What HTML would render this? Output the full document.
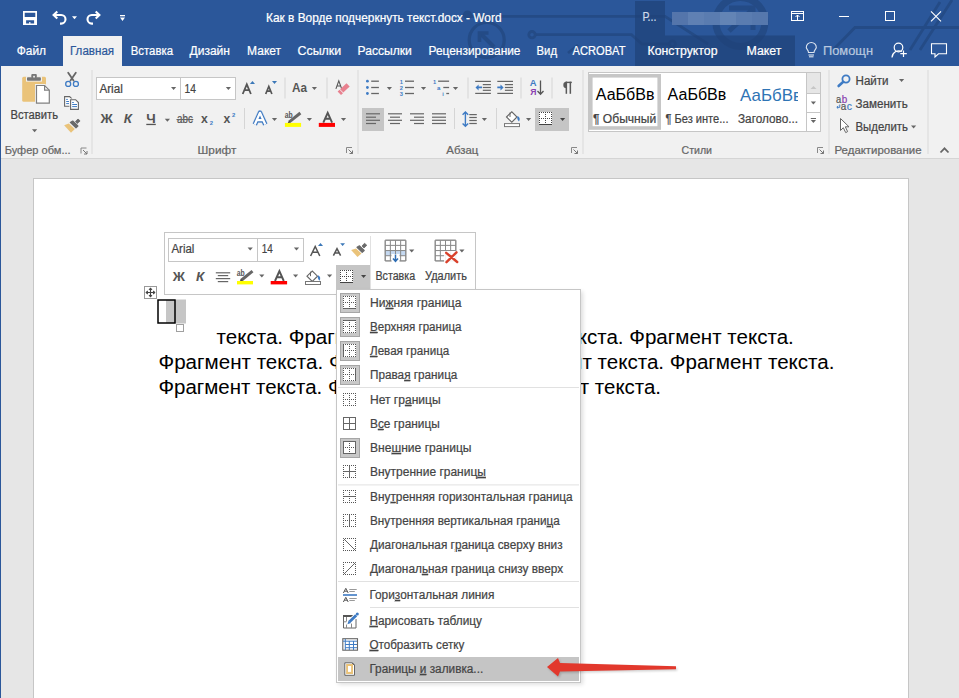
<!DOCTYPE html>
<html><head><meta charset="utf-8"><title>Word</title>
<style>
html,body{margin:0;padding:0;width:959px;height:698px;overflow:hidden;background:#E6E6E6}
svg{display:block}
text{font-family:"Liberation Sans", sans-serif;}
text.w{stroke-width:0.22px}
</style></head><body>
<svg width="959" height="698" viewBox="0 0 959 698">
<rect x="0" y="0" width="959" height="66" fill="#2B579A" />
<rect x="0" y="66" width="959" height="92" fill="#F1F1F1" />
<rect x="0" y="158" width="959" height="1" fill="#D5D5D5" />
<rect x="0" y="159" width="959" height="539" fill="#E6E6E6" />
<rect x="0" y="66" width="1" height="632" fill="#2B579A" />
<rect x="33.5" y="178.5" width="875" height="530" fill="#FFFFFF" stroke="#C6C6C6" stroke-width="1"/>
<g fill="none" stroke="#244B86" stroke-width="2.8" opacity="1">
<path d="M467.5 16.3 H665 L708 44"/>
<circle cx="467.5" cy="15" r="3.2" fill="#244B86"/>
<circle cx="486.7" cy="40" r="17.5" stroke-width="3.2"/>
<path d="M481 34 L494 47" stroke-width="4"/>
<path d="M479.5 42 V33 H488.5" stroke-width="3.6"/>
<path d="M535.5 34.7 H631.5 L642 44 H669"/>
<circle cx="532" cy="34.7" r="3.2"/>
<circle cx="672.4" cy="43.8" r="3"/>
<path d="M568 53 L578 45"/>
<circle cx="740.4" cy="21.9" r="24.5" stroke-width="7"/>
<path d="M729 8 H753 V30" stroke-width="5"/>
<path d="M752 10 L729 31" stroke-width="5"/>
<path d="M834 49 L855 27.5 H959"/>
<path d="M910 50 L940 2 M920 50 L952 0"/>
</g>
<path d="M635 1 H665 V35.5 H795 V66 H635 Z" fill="#1F4177" opacity="0.7"/>
<text x="266.00" y="21.70" font-size="13" fill="#FFFFFF" class="w" stroke="#FFFFFF" textLength="235.50" lengthAdjust="spacingAndGlyphs">Как в Ворде подчеркнуть текст.docx - Word</text>
<text x="642.60" y="20.80" font-size="12" fill="#D0DAEA" class="w" stroke="#D0DAEA" textLength="13.70" lengthAdjust="spacingAndGlyphs">Р...</text>
<g>
<rect x="672" y="12" width="96" height="13" fill="#5A7CB0"/>
<rect x="672" y="12" width="16" height="13" fill="#5475AB"/>
<rect x="688" y="12" width="16" height="13" fill="#5F80B3"/>
<rect x="720" y="12" width="16" height="13" fill="#6384B5"/>
<rect x="752" y="12" width="16" height="13" fill="#5678AD"/>
</g>
<rect x="63" y="36" width="59" height="30" fill="#F1F1F1" />
<text x="16.70" y="55.20" font-size="12.5" fill="#FFFFFF" class="w" stroke="#FFFFFF" textLength="29.30" lengthAdjust="spacingAndGlyphs">Файл</text>
<text x="70.00" y="55.20" font-size="12.5" fill="#2B579A" class="w" stroke="#2B579A" textLength="44.10" lengthAdjust="spacingAndGlyphs">Главная</text>
<text x="130.80" y="55.20" font-size="12.5" fill="#FFFFFF" class="w" stroke="#FFFFFF" textLength="42.20" lengthAdjust="spacingAndGlyphs">Вставка</text>
<text x="189.50" y="55.20" font-size="12.5" fill="#FFFFFF" class="w" stroke="#FFFFFF" textLength="40.50" lengthAdjust="spacingAndGlyphs">Дизайн</text>
<text x="247.10" y="55.20" font-size="12.5" fill="#FFFFFF" class="w" stroke="#FFFFFF" textLength="34.00" lengthAdjust="spacingAndGlyphs">Макет</text>
<text x="297.50" y="55.20" font-size="12.5" fill="#FFFFFF" class="w" stroke="#FFFFFF" textLength="43.70" lengthAdjust="spacingAndGlyphs">Ссылки</text>
<text x="357.50" y="55.20" font-size="12.5" fill="#FFFFFF" class="w" stroke="#FFFFFF" textLength="54.30" lengthAdjust="spacingAndGlyphs">Рассылки</text>
<text x="428.50" y="55.20" font-size="12.5" fill="#FFFFFF" class="w" stroke="#FFFFFF" textLength="92.00" lengthAdjust="spacingAndGlyphs">Рецензирование</text>
<text x="536.50" y="55.20" font-size="12.5" fill="#FFFFFF" class="w" stroke="#FFFFFF" textLength="20.50" lengthAdjust="spacingAndGlyphs">Вид</text>
<text x="572.50" y="55.20" font-size="12.5" fill="#FFFFFF" class="w" stroke="#FFFFFF" textLength="53.00" lengthAdjust="spacingAndGlyphs">ACROBAT</text>
<text x="647.50" y="55.20" font-size="12.5" fill="#FFFFFF" class="w" stroke="#FFFFFF" textLength="70.00" lengthAdjust="spacingAndGlyphs">Конструктор</text>
<text x="746.50" y="55.20" font-size="12.5" fill="#FFFFFF" class="w" stroke="#FFFFFF" textLength="35.00" lengthAdjust="spacingAndGlyphs">Макет</text>
<text x="823.00" y="55.20" font-size="12.5" fill="#B9C8DF" class="w" stroke="#B9C8DF" textLength="50.00" lengthAdjust="spacingAndGlyphs">Помощн</text>
<g fill="#FFFFFF">
<path d="M23 11 H37 V25 H23 Z M24.7 12.7 V16.9 H35.3 V12.7 Z M26.1 20.3 V23.4 H29.2 V22.1 H30.4 V23.4 H34.1 V20.3 Z" fill-rule="evenodd"/>
</g>
<g fill="none" stroke="#FFFFFF" stroke-width="2.1">
<path d="M53.5 15 H61.2 A4.3 4.3 0 0 1 61.2 23.6 H60"/>
<path d="M57.3 11.5 L53.6 15 L57.3 18.5"/>
</g>
<path d="M72 16.3 H77 L74.5 19.3 Z" fill="#FFFFFF"/>
<g fill="none" stroke="#FFFFFF" stroke-width="2.1">
<path d="M99.5 15 H91.8 A4.3 4.3 0 0 0 91.8 23.6 H93"/>
<path d="M95.7 11.5 L99.4 15 L95.7 18.5"/>
</g>
<rect x="120" y="15" width="5" height="1.3" fill="#FFFFFF"/><path d="M120 17.5 H125 L122.5 21 Z" fill="#FFFFFF"/>
<g fill="none" stroke="#FFFFFF" stroke-width="1" shape-rendering="crispEdges">
<rect x="791.5" y="11.5" width="12" height="9"/>
<line x1="791.5" y1="13.5" x2="803.5" y2="13.5"/>
<line x1="797.5" y1="15" x2="797.5" y2="20.5"/>
<line x1="839" y1="16.5" x2="849" y2="16.5"/>
<rect x="885.5" y="11.5" width="9" height="9"/>
</g>
<path d="M795.5 17 L797.5 15 L799.5 17" fill="none" stroke="#FFFFFF" stroke-width="1"/>
<path d="M931 11.3 L941 21.3 M941 11.3 L931 21.3" stroke="#FFFFFF" stroke-width="1.1"/>
<g fill="none" stroke="#DDE5F0" stroke-width="1.1">
<path d="M808.5 52.5 C808.5 50 806.3 49 806.3 47.5 A5 5 0 0 1 816.3 47.5 C816.3 49 814 50 814 52.5 Z"/>
<line x1="808.5" y1="55" x2="814" y2="55"/>
<line x1="809" y1="56.8" x2="813.5" y2="56.8"/>
</g>
<g fill="none" stroke="#FFFFFF" stroke-width="1.2">
<circle cx="898.5" cy="47.5" r="4.3"/>
<path d="M892 57.5 A7 7 0 0 1 902 51.5"/>
<path d="M903.5 50.5 V57 M900.3 53.7 H906.8"/>
</g>
<path d="M931.5 43.8 H946.5 V53.8 H938.5 L935 57 V53.8 H931.5 Z" fill="none" stroke="#FFFFFF" stroke-width="1.1"/>
<text x="10.50" y="118.50" font-size="12" fill="#444444" class="w" stroke="#444444" textLength="47.50" lengthAdjust="spacingAndGlyphs">Вставить</text>
<text x="4.70" y="153.60" font-size="11" fill="#666666" class="w" stroke="#666666" textLength="66.00" lengthAdjust="spacingAndGlyphs">Буфер обм...</text>
<text x="197.60" y="153.60" font-size="11" fill="#666666" class="w" stroke="#666666" textLength="38.70" lengthAdjust="spacingAndGlyphs">Шрифт</text>
<text x="446.30" y="153.60" font-size="11" fill="#666666" class="w" stroke="#666666" textLength="32.00" lengthAdjust="spacingAndGlyphs">Абзац</text>
<text x="681.50" y="153.60" font-size="11" fill="#666666" class="w" stroke="#666666" textLength="30.50" lengthAdjust="spacingAndGlyphs">Стили</text>
<text x="834.50" y="153.60" font-size="11" fill="#666666" class="w" stroke="#666666" textLength="87.00" lengthAdjust="spacingAndGlyphs">Редактирование</text>
<rect x="91.5" y="70" width="1" height="84" fill="#DADADA" />
<rect x="357.5" y="70" width="1" height="84" fill="#DADADA" />
<rect x="582.5" y="70" width="1" height="84" fill="#DADADA" />
<rect x="828.5" y="70" width="1" height="84" fill="#DADADA" />
<rect x="927.5" y="70" width="1" height="84" fill="#DADADA" />
<rect x="96.5" y="77.5" width="84" height="22" fill="#FFFFFF" stroke="#C6C6C6"/>
<rect x="180.5" y="77.5" width="55" height="22" fill="#FFFFFF" stroke="#C6C6C6"/>
<text x="99.40" y="92.90" font-size="12" fill="#444444" class="w" stroke="#444444" textLength="23.40" lengthAdjust="spacingAndGlyphs">Arial</text>
<text x="184.60" y="92.90" font-size="12" fill="#444444" class="w" stroke="#444444" textLength="11.40" lengthAdjust="spacingAndGlyphs">14</text>
<rect x="588.5" y="72.5" width="232" height="59" fill="#FFFFFF" stroke="#C6C6C6"/>
<rect x="590.8" y="75.8" width="68.4" height="52.2" fill="none" stroke="#C6C6C6" stroke-width="3.6"/>
<text x="595.80" y="99.90" font-size="16" fill="#000000" textLength="58.70" lengthAdjust="spacingAndGlyphs">АаБбВв</text>
<text x="593.00" y="122.60" font-size="12" fill="#444444" class="w" stroke="#444444" textLength="63.20" lengthAdjust="spacingAndGlyphs">¶ Обычный</text>
<text x="667.60" y="99.90" font-size="16" fill="#000000" textLength="58.70" lengthAdjust="spacingAndGlyphs">АаБбВв</text>
<text x="665.40" y="122.60" font-size="12" fill="#444444" class="w" stroke="#444444" textLength="63.10" lengthAdjust="spacingAndGlyphs">¶ Без инте...</text>
<clipPath id="cl1"><rect x="730" y="80" width="68" height="30"/></clipPath>
<text x="740.00" y="100.70" font-size="17" fill="#2E74B5" textLength="62.00" lengthAdjust="spacingAndGlyphs" clip-path="url(#cl1)">АаБбВв</text>
<text x="738.00" y="122.60" font-size="12" fill="#444444" class="w" stroke="#444444" textLength="60.00" lengthAdjust="spacingAndGlyphs">Заголово...</text>
<rect x="806.5" y="72.5" width="14" height="59" fill="#FFFFFF" stroke="#C6C6C6"/>
<rect x="807" y="73" width="13" height="20" fill="#E6E6E6" />
<line x1="806.5" y1="93.5" x2="820.5" y2="93.5" stroke="#C6C6C6" stroke-width="1" />
<line x1="806.5" y1="112.5" x2="820.5" y2="112.5" stroke="#C6C6C6" stroke-width="1" />
<text x="855.50" y="84.90" font-size="12" fill="#444444" class="w" stroke="#444444" textLength="33.10" lengthAdjust="spacingAndGlyphs">Найти</text>
<text x="855.50" y="107.90" font-size="12" fill="#444444" class="w" stroke="#444444" textLength="52.20" lengthAdjust="spacingAndGlyphs">Заменить</text>
<text x="855.50" y="131.00" font-size="12" fill="#444444" class="w" stroke="#444444" textLength="52.50" lengthAdjust="spacingAndGlyphs">Выделить</text>
<rect x="362" y="108" width="22" height="23" fill="#C5C5C5" />
<rect x="535" y="108" width="34" height="23" fill="#C5C5C5" />
<g>
<rect x="22.2" y="76.8" width="23.8" height="25" rx="1.5" fill="#EAC37A"/>
<rect x="26" y="76.3" width="16" height="5.3" fill="#F1F1F1"/>
<rect x="27" y="77.3" width="13.9" height="3.4" rx="0.8" fill="#777"/>
<rect x="31.3" y="74" width="5.5" height="4" rx="1" fill="#777"/>
<rect x="33.2" y="75.8" width="1.7" height="1.7" fill="#F1F1F1"/>
<path d="M35 84 H45.2 L50.8 89.6 V104.7 H35 Z" fill="#F1F1F1"/>
<path d="M36.5 85.5 H44.6 L49.3 90.2 V103.2 H36.5 Z" fill="#FFF" stroke="#808080" stroke-width="1.2"/>
<path d="M44.6 85.5 V90.2 H49.3" fill="none" stroke="#808080" stroke-width="1.2"/>
</g>
<path d="M32 129.2 H37.2 L34.6 132.2 Z" fill="#666"/>
<g>
<path d="M68.2 72.8 L73.5 80.5 M75.8 72.8 L70.5 80.5" stroke="#666" stroke-width="1.8" stroke-linecap="round"/>
<circle cx="68.2" cy="83.9" r="2.5" fill="none" stroke="#3E7BC4" stroke-width="1.3"/>
<circle cx="75.9" cy="83.9" r="2.5" fill="none" stroke="#3E7BC4" stroke-width="1.3"/>
</g>
<g stroke="#666" stroke-width="1.1" fill="#FFF">
<path d="M64.6 96.6 H69.6 L71.6 98.6 V106.3 H64.6 Z"/>
<path d="M70.6 99.7 H75.6 L78.4 102.5 V109.4 H70.6 Z" stroke="#F1F1F1" stroke-width="2.4"/>
<path d="M70.6 99.7 H75.6 L78.4 102.5 V109.4 H70.6 Z"/>
</g>
<g stroke="#3E7BC4" stroke-width="1">
<path d="M66.2 99.4 H67.8 M66.2 101.5 H69 M66.2 103.6 H69"/>
<path d="M72.2 102.5 H73.8 M72.2 104.5 H77 M72.2 106.6 H77"/>
</g>
<path d="M64.1 125.3 L68.8 123.6 L74.8 129 L71 132.7 Z" fill="#EAC37A"/>
<path d="M70.3 122.4 L72.7 121 L77.9 126 L76 127.8 Z" fill="#6A6A6A" stroke="#6A6A6A" stroke-width="1.2" stroke-linejoin="round"/>
<path d="M75.5 121.4 L78 119 L80.1 120.9 L77.2 123.5 Z" fill="#6A6A6A" stroke="#6A6A6A" stroke-width="0.8" stroke-linejoin="round"/>
<path d="M81.0 153.5 V148.0 H86.5" fill="none" stroke="#888" stroke-width="1"/><path d="M83.0 150.0 L87.0 154.0 M87.0 151.0 V154.0 H84.0" fill="none" stroke="#777" stroke-width="1"/>
<path d="M346.5 153 V147.5 H352" fill="none" stroke="#888" stroke-width="1"/><path d="M348.5 149.5 L352.5 153.5 M352.5 150.5 V153.5 H349.5" fill="none" stroke="#777" stroke-width="1"/>
<path d="M571.5 153 V147.5 H577" fill="none" stroke="#888" stroke-width="1"/><path d="M573.5 149.5 L577.5 153.5 M577.5 150.5 V153.5 H574.5" fill="none" stroke="#777" stroke-width="1"/>
<path d="M817.5 153 V147.5 H823" fill="none" stroke="#888" stroke-width="1"/><path d="M819.5 149.5 L823.5 153.5 M823.5 150.5 V153.5 H820.5" fill="none" stroke="#777" stroke-width="1"/>
<path d="M171 87 H176.2 L173.6 90 Z" fill="#666"/>
<path d="M225.8 87 H231.0 L228.4 90 Z" fill="#666"/>
<text x="100.50" y="122.80" font-size="12.5" fill="#555" font-weight="bold" textLength="12.30" lengthAdjust="spacingAndGlyphs">Ж</text>
<text x="123.80" y="122.80" font-size="12.5" fill="#555" font-weight="bold" textLength="8.20" lengthAdjust="spacingAndGlyphs" font-style="italic">К</text>
<text x="146.30" y="122.80" font-size="12.5" fill="#555" font-weight="bold" textLength="9.50" lengthAdjust="spacingAndGlyphs">Ч</text>
<rect x="146.3" y="123.8" width="9.5" height="1.3" fill="#555" />
<path d="M164.8 118.8 H170.0 L167.4 121.8 Z" fill="#666"/>
<text x="177.10" y="122.80" font-size="12.5" fill="#555" class="w" stroke="#555" textLength="15.70" lengthAdjust="spacingAndGlyphs">abc</text>
<rect x="176.5" y="119" width="16.8" height="1.1" fill="#666" />
<text x="201.10" y="122.80" font-size="12.5" fill="#555" font-weight="bold" textLength="6.80" lengthAdjust="spacingAndGlyphs">x</text>
<text x="209.80" y="124.80" font-size="6" fill="#3E7BC4" font-weight="bold" textLength="3.30" lengthAdjust="spacingAndGlyphs">2</text>
<text x="223.60" y="122.80" font-size="12.5" fill="#555" font-weight="bold" textLength="6.80" lengthAdjust="spacingAndGlyphs">x</text>
<text x="231.90" y="117.30" font-size="6" fill="#3E7BC4" font-weight="bold" textLength="3.30" lengthAdjust="spacingAndGlyphs">2</text>
<g fill="none" stroke="#555" stroke-width="1.5">
<path d="M242.7 94 L246.8 84.4 L250.9 94 M244.3 90.2 H249.3" stroke-width="1.8"/>
<path d="M265.7 94 L268.8 86.5 L271.9 94 M266.8 91.2 H270.8" stroke-width="1.7"/>
</g>
<path d="M249.9 83.9 L252.45 80.9 L255 83.9 Z" fill="#3C78B8"/>
<path d="M272 80.9 H277 L274.5 83.9 Z" fill="#3C78B8"/>
<rect x="284.5" y="77.5" width="1" height="21" fill="#D5D5D5" />
<rect x="326.5" y="77.5" width="1" height="21" fill="#D5D5D5" />
<text x="292.10" y="91.70" font-size="12.5" fill="#555" font-weight="bold" textLength="15.00" lengthAdjust="spacingAndGlyphs">Aa</text>
<path d="M311.8 87.1 H317.0 L314.40000000000003 90.1 Z" fill="#666"/>
<path d="M335.9 88.9 L338.8 80.9 L341.7 88.9 M337 86 H340.6" fill="none" stroke="#555" stroke-width="1.1"/>
<path d="M340.1 89.2 L346.5 83.2 L349.7 86.6 L343.3 92.6 Z" fill="#E8818F"/>
<path d="M337.6 91.5 L339.6 89.7 L343 93.3 L341 95.1 Z" fill="#E8818F"/>
<rect x="244" y="108" width="1" height="21" fill="#D5D5D5" />
<path d="M254.8 124.5 L260 112.8 L265.3 124.5 M256.9 120.2 H263.1" fill="none" stroke="#8DB3E2" stroke-width="5.4" stroke-linejoin="round" opacity="0.5"/>
<path d="M254.8 124.5 L260 112.8 L265.3 124.5 M256.9 120.2 H263.1" fill="none" stroke="#3D78C0" stroke-width="4.4" stroke-linejoin="round"/>
<path d="M254.8 124.5 L260 112.8 L265.3 124.5 M256.9 120.2 H263.1" fill="none" stroke="#FFF" stroke-width="2.2" stroke-linejoin="round"/>
<path d="M271.9 118 H277.09999999999997 L274.5 121 Z" fill="#666"/>
<text x="284.70" y="117.80" font-size="9.5" fill="#555" font-weight="bold" textLength="8.00" lengthAdjust="spacingAndGlyphs">ab</text>
<path d="M289 122.2 L300.4 113" stroke="#666" stroke-width="3"/><path d="M288.2 123 L290 121.5" stroke="#444" stroke-width="1.2"/>
<rect x="284.9" y="122.9" width="16.2" height="4" fill="#FFFF00" />
<path d="M306.8 118 H312.0 L309.40000000000003 121 Z" fill="#666"/>
<path d="M323.3 122.7 L327.7 112.8 L332.1 122.7 M325 118.8 H330.4" fill="none" stroke="#555" stroke-width="1.9"/>
<rect x="318.8" y="122.9" width="16.2" height="4" fill="#FF0000" />
<path d="M340.9 118 H346.09999999999997 L343.5 121 Z" fill="#666"/>
<circle cx="367.4" cy="81.2" r="1.4" fill="#3E7BC4"/>
<rect x="371.2" y="80.55" width="7.7" height="1.3" fill="#666666" />
<rect x="405" y="80.55" width="9" height="1.3" fill="#666666" />
<circle cx="367.4" cy="87.5" r="1.4" fill="#3E7BC4"/>
<rect x="371.2" y="86.85" width="7.7" height="1.3" fill="#666666" />
<rect x="405" y="86.85" width="9" height="1.3" fill="#666666" />
<circle cx="367.4" cy="93.5" r="1.4" fill="#3E7BC4"/>
<rect x="371.2" y="92.85" width="7.7" height="1.3" fill="#666666" />
<rect x="405" y="92.85" width="9" height="1.3" fill="#666666" />
<path d="M386.8 87 H392.0 L389.40000000000003 90 Z" fill="#666"/>
<path d="M420.9 87 H426.09999999999997 L423.5 90 Z" fill="#666"/>
<path d="M452.9 87 H458.09999999999997 L455.5 90 Z" fill="#666"/>
<text x="399.80" y="84.00" font-size="5.5" fill="#3E7BC4" font-weight="bold" textLength="3.20" lengthAdjust="spacingAndGlyphs">1</text>
<text x="399.80" y="90.20" font-size="5.5" fill="#3E7BC4" font-weight="bold" textLength="3.20" lengthAdjust="spacingAndGlyphs">2</text>
<text x="399.80" y="96.20" font-size="5.5" fill="#3E7BC4" font-weight="bold" textLength="3.20" lengthAdjust="spacingAndGlyphs">3</text>
<text x="432.90" y="84.00" font-size="5.5" fill="#3E7BC4" font-weight="bold" textLength="3.20" lengthAdjust="spacingAndGlyphs">1</text>
<text x="437.00" y="90.20" font-size="5.5" fill="#3E7BC4" font-weight="bold" textLength="3.40" lengthAdjust="spacingAndGlyphs">a</text>
<text x="442.20" y="96.20" font-size="5.5" fill="#3E7BC4" font-weight="bold" textLength="1.50" lengthAdjust="spacingAndGlyphs">i</text>
<rect x="438.1" y="80.55" width="11" height="1.3" fill="#666666" />
<rect x="443.3" y="86.85" width="5.8" height="1.3" fill="#666666" />
<rect x="446.3" y="92.85" width="2.8" height="1.3" fill="#666666" />
<rect x="467.5" y="77.5" width="1" height="21" fill="#D5D5D5" />
<rect x="520.5" y="77.5" width="1" height="21" fill="#D5D5D5" />
<rect x="551.5" y="77.5" width="1" height="21" fill="#D5D5D5" />
<rect x="475.2" y="80.8" width="15.7" height="1.2" fill="#666666" />
<rect x="475.2" y="92.8" width="15.7" height="1.2" fill="#666666" />
<rect x="482.8" y="84" width="8.1" height="1.2" fill="#666666" />
<rect x="482.8" y="86.9" width="8.1" height="1.2" fill="#666666" />
<rect x="482.8" y="89.7" width="8.1" height="1.2" fill="#666666" />
<rect x="497.3" y="80.8" width="15.7" height="1.2" fill="#666666" />
<rect x="497.3" y="92.8" width="15.7" height="1.2" fill="#666666" />
<rect x="504.90000000000003" y="84" width="8.1" height="1.2" fill="#666666" />
<rect x="504.90000000000003" y="86.9" width="8.1" height="1.2" fill="#666666" />
<rect x="504.90000000000003" y="89.7" width="8.1" height="1.2" fill="#666666" />
<path d="M475.5 87.4 L478.6 84.4 V86.5 H482 V88.3 H478.6 V90.4 Z" fill="#3E7BC4"/>
<path d="M503.6 87.4 L500.5 84.4 V86.5 H497.3 V88.3 H500.5 V90.4 Z" fill="#3E7BC4"/>
<text x="529.70" y="86.40" font-size="9" fill="#3E7BC4" font-weight="bold" textLength="6.80" lengthAdjust="spacingAndGlyphs">A</text>
<text x="530.20" y="94.70" font-size="9" fill="#8A3FB0" font-weight="bold" textLength="6.20" lengthAdjust="spacingAndGlyphs">Я</text>
<path d="M540.5 80.4 V94 M537.5 91 L540.5 94.3 L543.5 91" fill="none" stroke="#555" stroke-width="1.3"/>
<g fill="#5A5A5A"><path d="M566.6 81.8 H561.9 A0.1 0.1 0 0 0 561.9 81.8 Z"/><path d="M566.6 81.7 A3.3 3.3 0 0 0 566.6 88.3 Z"/><rect x="565.6" y="81.7" width="6.2" height="1.4"/><rect x="565.6" y="81.7" width="1.5" height="12.1"/><rect x="569.6" y="81.7" width="1.5" height="12.1"/></g>
<rect x="366" y="113.2" width="14" height="1.2" fill="#666666" />
<rect x="366" y="116.60000000000001" width="10" height="1.2" fill="#666666" />
<rect x="366" y="119.7" width="14" height="1.2" fill="#666666" />
<rect x="366" y="122.9" width="10" height="1.2" fill="#666666" />
<rect x="388" y="113.2" width="14" height="1.2" fill="#666666" />
<rect x="390" y="116.60000000000001" width="10" height="1.2" fill="#666666" />
<rect x="388" y="119.7" width="14" height="1.2" fill="#666666" />
<rect x="390" y="122.9" width="10" height="1.2" fill="#666666" />
<rect x="410" y="113.2" width="14" height="1.2" fill="#666666" />
<rect x="414" y="116.60000000000001" width="10" height="1.2" fill="#666666" />
<rect x="410" y="119.7" width="14" height="1.2" fill="#666666" />
<rect x="414" y="122.9" width="10" height="1.2" fill="#666666" />
<rect x="432" y="113.2" width="14" height="1.2" fill="#666666" />
<rect x="432" y="116.60000000000001" width="14" height="1.2" fill="#666666" />
<rect x="432" y="119.7" width="14" height="1.2" fill="#666666" />
<rect x="432" y="122.9" width="14" height="1.2" fill="#666666" />
<rect x="454" y="108" width="1" height="21" fill="#D5D5D5" />
<rect x="496" y="108" width="1" height="21" fill="#D5D5D5" />
<path d="M465.4 112 V126.2 M462.6 114.8 L465.4 112 L468.2 114.8 M462.6 123.4 L465.4 126.2 L468.2 123.4" fill="none" stroke="#3E7BC4" stroke-width="1.4"/>
<rect x="469.3" y="114.0" width="7.5" height="1.2" fill="#666666" />
<rect x="469.3" y="116.9" width="7.5" height="1.2" fill="#666666" />
<rect x="469.3" y="119.9" width="7.5" height="1.2" fill="#666666" />
<rect x="469.3" y="122.9" width="7.5" height="1.2" fill="#666666" />
<path d="M481.8 118 H487.0 L484.40000000000003 121 Z" fill="#666"/>
<path d="M506.5 117 L511.8 111.8 L517 117 L511.8 122.2 Z" fill="#FFF" stroke="#666" stroke-width="1.1"/>
<path d="M510 112.5 V117" stroke="#666" stroke-width="1"/>
<path d="M517.5 116 Q521 117.5 519 121.5 Q516.5 119 517.5 116 Z" fill="#3E7BC4"/>
<rect x="504.5" y="123.6" width="15" height="3" fill="#FFF" stroke="#777" stroke-width="1"/>
<path d="M526 118 H531.2 L528.6 121 Z" fill="#666"/>
<rect x="539" y="112" width="13" height="13" fill="#FFFFFF" />
<g shape-rendering="crispEdges"><rect x="539" y="124" width="13" height="1" fill="#444"/><rect x="539" y="112" width="1" height="1" fill="#444"/><rect x="539" y="114" width="1" height="1" fill="#444"/><rect x="539" y="116" width="1" height="1" fill="#444"/><rect x="539" y="118" width="1" height="1" fill="#444"/><rect x="539" y="120" width="1" height="1" fill="#444"/><rect x="539" y="122" width="1" height="1" fill="#444"/><rect x="539" y="124" width="1" height="1" fill="#444"/><rect x="541" y="112" width="1" height="1" fill="#444"/><rect x="541" y="118" width="1" height="1" fill="#444"/><rect x="543" y="112" width="1" height="1" fill="#444"/><rect x="543" y="118" width="1" height="1" fill="#444"/><rect x="545" y="112" width="1" height="1" fill="#444"/><rect x="545" y="114" width="1" height="1" fill="#444"/><rect x="545" y="116" width="1" height="1" fill="#444"/><rect x="545" y="118" width="1" height="1" fill="#444"/><rect x="545" y="120" width="1" height="1" fill="#444"/><rect x="545" y="122" width="1" height="1" fill="#444"/><rect x="545" y="124" width="1" height="1" fill="#444"/><rect x="547" y="112" width="1" height="1" fill="#444"/><rect x="547" y="118" width="1" height="1" fill="#444"/><rect x="549" y="112" width="1" height="1" fill="#444"/><rect x="549" y="118" width="1" height="1" fill="#444"/><rect x="551" y="112" width="1" height="1" fill="#444"/><rect x="551" y="114" width="1" height="1" fill="#444"/><rect x="551" y="116" width="1" height="1" fill="#444"/><rect x="551" y="118" width="1" height="1" fill="#444"/><rect x="551" y="120" width="1" height="1" fill="#444"/><rect x="551" y="122" width="1" height="1" fill="#444"/><rect x="551" y="124" width="1" height="1" fill="#444"/></g>
<path d="M560 118 H565.2 L562.6 121 Z" fill="#444"/>
<path d="M810.5 89 L813.5 86 L816.5 89 Z" fill="#C6C6C6"/>
<path d="M810.8 101.5 H816.0 L813.4 104.5 Z" fill="#666"/>
<rect x="810.8" y="118" width="5.2" height="1" fill="#666" />
<path d="M810.8 120 H816.0 L813.4 123 Z" fill="#666"/>
<circle cx="846" cy="79" r="3.6" fill="none" stroke="#3E7BC4" stroke-width="1.8"/>
<path d="M843.3 81.8 L838.6 86" stroke="#3E7BC4" stroke-width="2.6" stroke-linecap="round"/>
<path d="M899 79 H904.2 L901.6 82 Z" fill="#666"/>
<text x="836.00" y="102.60" font-size="10.5" fill="#555" class="w" stroke="#555" textLength="5.20" lengthAdjust="spacingAndGlyphs">a</text>
<text x="841.80" y="102.60" font-size="10.5" fill="#8A3FB0" class="w" stroke="#8A3FB0" textLength="5.50" lengthAdjust="spacingAndGlyphs">b</text>
<text x="840.80" y="109.50" font-size="10.5" fill="#555" class="w" stroke="#555" textLength="5.50" lengthAdjust="spacingAndGlyphs">a</text>
<text x="846.80" y="109.50" font-size="10.5" fill="#3E7BC4" class="w" stroke="#3E7BC4" textLength="5.20" lengthAdjust="spacingAndGlyphs">c</text>
<path d="M839.8 104.5 V107.3 H837 M838.2 106 L836.8 107.3 L838.2 108.6" fill="none" stroke="#3E7BC4" stroke-width="1"/>
<path d="M840.5 118.5 V130.5 L843.3 127.7 L845.7 132.6 L847.6 131.6 L845.3 126.8 L849 126.8 Z" fill="#FFF" stroke="#666" stroke-width="1" stroke-linejoin="round"/>
<path d="M911 125.5 H916.2 L913.6 128.5 Z" fill="#666"/>
<path d="M940.5 152.5 L944.5 148.3 L948.5 152.5" fill="none" stroke="#666" stroke-width="1.8"/>
<text x="216.60" y="343.50" font-size="20.5" fill="#000000" textLength="577.20" lengthAdjust="spacingAndGlyphs" stroke="#000" stroke-width="0.05">текста. Фрагмент текста. Фрагмент текста. Фрагмент текста.</text>
<text x="158.50" y="368.50" font-size="20.5" fill="#000000" textLength="676.00" lengthAdjust="spacingAndGlyphs" stroke="#000" stroke-width="0.05">Фрагмент текста. Фрагмент текста. Фрагмент текста. Фрагмент текста.</text>
<text x="158.50" y="394.00" font-size="20.5" fill="#000000" textLength="502.50" lengthAdjust="spacingAndGlyphs" stroke="#000" stroke-width="0.05">Фрагмент текста. Фрагмент текста. Фрагмент текста.</text>
<rect x="166" y="300" width="10" height="23" fill="#C6C6C6" />
<rect x="176" y="299.5" width="10" height="24" fill="#C6C6C6" />
<rect x="158" y="300" width="17" height="23" fill="none" stroke="#000" stroke-width="1.5"/>
<rect x="176.5" y="324.5" width="7" height="7" fill="#FFFFFF" stroke="#A0A0A0"/>
<rect x="144.5" y="286.5" width="12" height="12" fill="#FFFFFF" stroke="#999"/>
<g stroke="#444" stroke-width="1.1" fill="none"><path d="M150.5 288.2 V296.7 M146.2 292.5 H154.7"/><path d="M149 289.8 L150.5 288.2 L152 289.8 M149 295.2 L150.5 296.7 L152 295.2 M147.8 291 L146.2 292.5 L147.8 294 M153.2 291 L154.7 292.5 L153.2 294"/></g>
<rect x="164.5" y="232.5" width="311" height="62" fill="#FFFFFF" stroke="#C6C6C6"/>
<rect x="168.5" y="238.5" width="89" height="23" fill="#FFFFFF" stroke="#C6C6C6"/>
<rect x="257.5" y="238.5" width="46" height="23" fill="#FFFFFF" stroke="#C6C6C6"/>
<text x="171.40" y="253.00" font-size="12.5" fill="#444" class="w" stroke="#444" textLength="23.00" lengthAdjust="spacingAndGlyphs">Arial</text>
<text x="261.70" y="253.00" font-size="12.5" fill="#444" class="w" stroke="#444" textLength="11.00" lengthAdjust="spacingAndGlyphs">14</text>
<path d="M247.6 247.5 H252.79999999999998 L250.2 250.5 Z" fill="#666"/>
<path d="M293.9 247.5 H299.09999999999997 L296.5 250.5 Z" fill="#666"/>
<g fill="none" stroke="#555" stroke-width="1.5">
<path d="M310.6 256 L315.2 246.5 L319.8 256 M312.3 252.3 H318.1"/>
<path d="M333.4 255.6 L337 248.6 L340.6 255.6 M334.7 253 H339.3"/>
</g>
<path d="M318 246 L320.5 243 L323 246 Z" fill="#3C78B8"/>
<path d="M340.2 243.3 H345 L342.6 246 Z" fill="#3C78B8"/>
<path d="M351.1 250 L356 248.5 L361.5 253.5 L357.5 257 Z" fill="#EAC37A"/>
<path d="M357 247.3 L359.5 245.8 L364.2 250.5 L362.2 252.3 Z" fill="#6A6A6A" stroke="#6A6A6A" stroke-width="1.2" stroke-linejoin="round"/>
<path d="M362 246 L364.5 243.3 L366.8 245.3 L364 248 Z" fill="#6A6A6A" stroke="#6A6A6A" stroke-width="0.8" stroke-linejoin="round"/>
<text x="172.70" y="281.00" font-size="12.5" fill="#555" font-weight="bold" textLength="12.20" lengthAdjust="spacingAndGlyphs">Ж</text>
<text x="195.90" y="281.00" font-size="12.5" fill="#555" font-weight="bold" textLength="8.30" lengthAdjust="spacingAndGlyphs" font-style="italic">К</text>
<rect x="215.8" y="272.2" width="14.4" height="1.2" fill="#666" />
<rect x="217.8" y="275.0" width="10.4" height="1.2" fill="#666" />
<rect x="215.8" y="278.0" width="14.4" height="1.2" fill="#666" />
<rect x="217.8" y="281.0" width="10.4" height="1.2" fill="#666" />
<text x="236.80" y="275.80" font-size="9.5" fill="#555" font-weight="bold" textLength="8.00" lengthAdjust="spacingAndGlyphs">ab</text>
<path d="M241 280.5 L252.5 271.2" stroke="#666" stroke-width="3"/><path d="M240.2 281.3 L242 279.8" stroke="#444" stroke-width="1.2"/>
<rect x="237" y="281" width="16" height="3.4" fill="#FFFF00" />
<path d="M259.2 274.5 H264.4 L261.8 277.5 Z" fill="#666"/>
<path d="M275 281 L279.4 271 L283.8 281 M276.7 277.2 H282.1" fill="none" stroke="#555" stroke-width="1.9"/>
<rect x="270.7" y="281" width="16.4" height="3.4" fill="#FF0000" />
<path d="M293 274.5 H298.2 L295.6 277.5 Z" fill="#666"/>
<path d="M307 276.2 L312.3 271 L317.5 276.2 L312.3 281.4 Z" fill="#FFF" stroke="#666" stroke-width="1.1"/>
<path d="M310.5 271.7 V276.2" stroke="#666" stroke-width="1"/>
<path d="M318 275.2 Q321.5 276.7 319.5 280.7 Q317 278.2 318 275.2 Z" fill="#3E7BC4"/>
<rect x="305.5" y="281.5" width="15" height="3" fill="#FFF" stroke="#777" stroke-width="1"/>
<path d="M327 274.5 H332.2 L329.6 277.5 Z" fill="#666"/>
<rect x="370" y="236" width="1" height="53" fill="#E1E1E1" />
<rect x="336" y="265" width="34" height="24" fill="#C5C5C5" />
<rect x="340" y="270" width="13" height="13" fill="#FFFFFF" />
<g shape-rendering="crispEdges"><rect x="340" y="282" width="13" height="1" fill="#444"/><rect x="340" y="270" width="1" height="1" fill="#444"/><rect x="340" y="272" width="1" height="1" fill="#444"/><rect x="340" y="274" width="1" height="1" fill="#444"/><rect x="340" y="276" width="1" height="1" fill="#444"/><rect x="340" y="278" width="1" height="1" fill="#444"/><rect x="340" y="280" width="1" height="1" fill="#444"/><rect x="340" y="282" width="1" height="1" fill="#444"/><rect x="342" y="270" width="1" height="1" fill="#444"/><rect x="342" y="276" width="1" height="1" fill="#444"/><rect x="344" y="270" width="1" height="1" fill="#444"/><rect x="344" y="276" width="1" height="1" fill="#444"/><rect x="346" y="270" width="1" height="1" fill="#444"/><rect x="346" y="272" width="1" height="1" fill="#444"/><rect x="346" y="274" width="1" height="1" fill="#444"/><rect x="346" y="276" width="1" height="1" fill="#444"/><rect x="346" y="278" width="1" height="1" fill="#444"/><rect x="346" y="280" width="1" height="1" fill="#444"/><rect x="346" y="282" width="1" height="1" fill="#444"/><rect x="348" y="270" width="1" height="1" fill="#444"/><rect x="348" y="276" width="1" height="1" fill="#444"/><rect x="350" y="270" width="1" height="1" fill="#444"/><rect x="350" y="276" width="1" height="1" fill="#444"/><rect x="352" y="270" width="1" height="1" fill="#444"/><rect x="352" y="272" width="1" height="1" fill="#444"/><rect x="352" y="274" width="1" height="1" fill="#444"/><rect x="352" y="276" width="1" height="1" fill="#444"/><rect x="352" y="278" width="1" height="1" fill="#444"/><rect x="352" y="280" width="1" height="1" fill="#444"/><rect x="352" y="282" width="1" height="1" fill="#444"/></g>
<path d="M361 275 H366.2 L363.6 278 Z" fill="#444"/>
<rect x="385.2" y="240.2" width="20.6" height="20.7" fill="#FFFFFF" />
<g><rect x="385.2" y="250.6" width="20.6" height="5.2" fill="#C5D9F1"/><line x1="385.2" y1="240.2" x2="385.2" y2="260.9" stroke="#888" stroke-width="1.4"/><line x1="385.2" y1="240.2" x2="405.8" y2="240.2" stroke="#888" stroke-width="1.4"/><line x1="390.34999999999997" y1="240.2" x2="390.34999999999997" y2="260.9" stroke="#888" stroke-width="1"/><line x1="385.2" y1="245.375" x2="405.8" y2="245.375" stroke="#888" stroke-width="1"/><line x1="395.5" y1="240.2" x2="395.5" y2="260.9" stroke="#888" stroke-width="1"/><line x1="385.2" y1="250.54999999999998" x2="405.8" y2="250.54999999999998" stroke="#888" stroke-width="1"/><line x1="400.65" y1="240.2" x2="400.65" y2="260.9" stroke="#888" stroke-width="1"/><line x1="385.2" y1="255.725" x2="405.8" y2="255.725" stroke="#888" stroke-width="1"/><line x1="405.8" y1="240.2" x2="405.8" y2="260.9" stroke="#888" stroke-width="1.4"/><line x1="385.2" y1="260.9" x2="405.8" y2="260.9" stroke="#888" stroke-width="1.4"/></g>
<rect x="391.5" y="254" width="8" height="8" fill="#FFF"/><path d="M395.5 254.5 V261 M393 258.5 L395.5 261.3 L398 258.5" fill="none" stroke="#2E6DB4" stroke-width="1.5"/>
<path d="M409.1 249.6 H414.3 L411.70000000000005 252.6 Z" fill="#666"/>
<rect x="435.2" y="240.2" width="20.6" height="20.7" fill="#FFFFFF" />
<g><line x1="435.2" y1="240.2" x2="435.2" y2="260.9" stroke="#888" stroke-width="1.4"/><line x1="435.2" y1="240.2" x2="455.8" y2="240.2" stroke="#888" stroke-width="1.4"/><line x1="440.34999999999997" y1="240.2" x2="440.34999999999997" y2="260.9" stroke="#888" stroke-width="1"/><line x1="435.2" y1="245.375" x2="455.8" y2="245.375" stroke="#888" stroke-width="1"/><line x1="445.5" y1="240.2" x2="445.5" y2="260.9" stroke="#888" stroke-width="1"/><line x1="435.2" y1="250.54999999999998" x2="455.8" y2="250.54999999999998" stroke="#888" stroke-width="1"/><line x1="450.65" y1="240.2" x2="450.65" y2="260.9" stroke="#888" stroke-width="1"/><line x1="435.2" y1="255.725" x2="455.8" y2="255.725" stroke="#888" stroke-width="1"/><line x1="455.8" y1="240.2" x2="455.8" y2="260.9" stroke="#888" stroke-width="1.4"/><line x1="435.2" y1="260.9" x2="455.8" y2="260.9" stroke="#888" stroke-width="1.4"/></g>
<rect x="444" y="251" width="14" height="12" fill="#FFF" opacity="0.9"/><path d="M446.2 252.8 L457.2 262 M456.5 252.3 L446.5 262.2" stroke="#D9412B" stroke-width="2.4" stroke-linecap="round"/>
<path d="M459.3 249.6 H464.5 L461.90000000000003 252.6 Z" fill="#666"/>
<text x="375.40" y="280.10" font-size="12.5" fill="#444" class="w" stroke="#444" textLength="39.80" lengthAdjust="spacingAndGlyphs">Вставка</text>
<text x="425.10" y="280.10" font-size="12.5" fill="#444" class="w" stroke="#444" textLength="41.80" lengthAdjust="spacingAndGlyphs">Удалить</text>
<filter id="sh" x="-10%" y="-10%" width="120%" height="120%"><feGaussianBlur stdDeviation="2.2"/></filter><filter id="sh2" x="-10%" y="-50%" width="120%" height="200%"><feGaussianBlur stdDeviation="1"/></filter>
<rect x="338" y="291.5" width="245" height="393" fill="#000" opacity="0.13" filter="url(#sh)"/>
<rect x="336.5" y="289.5" width="244" height="393" fill="#FFFFFF" stroke="#C6C6C6"/>
<text x="370.00" y="306.90" font-size="12.5" fill="#444" class="w" stroke="#444" textLength="91.50" lengthAdjust="spacingAndGlyphs">Ни<tspan text-decoration="underline">ж</tspan>няя граница</text>
<text x="370.00" y="330.90" font-size="12.5" fill="#444" class="w" stroke="#444" textLength="91.50" lengthAdjust="spacingAndGlyphs"><tspan text-decoration="underline">В</tspan>ерхняя граница</text>
<text x="370.00" y="354.90" font-size="12.5" fill="#444" class="w" stroke="#444" textLength="79.30" lengthAdjust="spacingAndGlyphs"><tspan text-decoration="underline">Л</tspan>евая граница</text>
<text x="370.00" y="378.90" font-size="12.5" fill="#444" class="w" stroke="#444" textLength="87.40" lengthAdjust="spacingAndGlyphs">Права<tspan text-decoration="underline">я</tspan> граница</text>
<text x="370.00" y="403.90" font-size="12.5" fill="#444" class="w" stroke="#444" textLength="70.60" lengthAdjust="spacingAndGlyphs">Нет гр<tspan text-decoration="underline">а</tspan>ницы</text>
<text x="370.00" y="427.90" font-size="12.5" fill="#444" class="w" stroke="#444" textLength="69.80" lengthAdjust="spacingAndGlyphs">В<tspan text-decoration="underline">с</tspan>е границы</text>
<text x="370.00" y="451.90" font-size="12.5" fill="#444" class="w" stroke="#444" textLength="101.50" lengthAdjust="spacingAndGlyphs">Вне<tspan text-decoration="underline">ш</tspan>ние границы</text>
<text x="370.00" y="475.90" font-size="12.5" fill="#444" class="w" stroke="#444" textLength="115.90" lengthAdjust="spacingAndGlyphs">Внутренние границ<tspan text-decoration="underline">ы</tspan></text>
<text x="370.00" y="500.90" font-size="12.5" fill="#444" class="w" stroke="#444" textLength="202.70" lengthAdjust="spacingAndGlyphs">Вну<tspan text-decoration="underline">т</tspan>ренняя горизонтальная граница</text>
<text x="370.00" y="524.90" font-size="12.5" fill="#444" class="w" stroke="#444" textLength="189.90" lengthAdjust="spacingAndGlyphs">Внутренняя вертикальная грани<tspan text-decoration="underline">ц</tspan>а</text>
<text x="370.00" y="548.90" font-size="12.5" fill="#444" class="w" stroke="#444" textLength="192.60" lengthAdjust="spacingAndGlyphs">Диагональная г<tspan text-decoration="underline">р</tspan>аница сверху вниз</text>
<text x="370.00" y="572.90" font-size="12.5" fill="#444" class="w" stroke="#444" textLength="193.20" lengthAdjust="spacingAndGlyphs">Диагонал<tspan text-decoration="underline">ь</tspan>ная граница снизу вверх</text>
<rect x="338" y="387" width="241" height="1" fill="#E1E1E1" />
<rect x="338" y="484.4" width="241" height="1" fill="#E1E1E1" />
<rect x="338" y="581" width="241" height="1" fill="#E1E1E1" />
<rect x="370" y="607" width="209" height="1" fill="#E1E1E1" />
<rect x="338" y="657" width="241" height="24" fill="#C5C5C5" />
<text x="369.40" y="598.90" font-size="12.5" fill="#444" class="w" stroke="#444" textLength="125.00" lengthAdjust="spacingAndGlyphs">Гори<tspan text-decoration="underline">з</tspan>онтальная линия</text>
<text x="369.40" y="624.90" font-size="12.5" fill="#444" class="w" stroke="#444" textLength="112.60" lengthAdjust="spacingAndGlyphs"><tspan text-decoration="underline">Н</tspan>арисовать таблицу</text>
<text x="369.40" y="648.90" font-size="12.5" fill="#444" class="w" stroke="#444" textLength="95.00" lengthAdjust="spacingAndGlyphs"><tspan text-decoration="underline">О</tspan>тобразить сетку</text>
<text x="369.40" y="672.90" font-size="12.5" fill="#444" class="w" stroke="#444" textLength="113.80" lengthAdjust="spacingAndGlyphs">Границы <tspan text-decoration="underline">и</tspan> заливка...</text>
<rect x="340.5" y="293.5" width="19" height="19" fill="#C8C8C8" stroke="#A6A6A6" stroke-width="1" shape-rendering="crispEdges"/>
<rect x="343" y="296" width="13" height="13" fill="#FFFFFF" />
<g shape-rendering="crispEdges"><rect x="343" y="308" width="13" height="1" fill="#666"/><rect x="343" y="296" width="1" height="1" fill="#555"/><rect x="343" y="298" width="1" height="1" fill="#555"/><rect x="343" y="300" width="1" height="1" fill="#555"/><rect x="343" y="302" width="1" height="1" fill="#555"/><rect x="343" y="304" width="1" height="1" fill="#555"/><rect x="343" y="306" width="1" height="1" fill="#555"/><rect x="343" y="308" width="1" height="1" fill="#555"/><rect x="345" y="296" width="1" height="1" fill="#555"/><rect x="345" y="302" width="1" height="1" fill="#555"/><rect x="347" y="296" width="1" height="1" fill="#555"/><rect x="347" y="302" width="1" height="1" fill="#555"/><rect x="349" y="296" width="1" height="1" fill="#555"/><rect x="349" y="298" width="1" height="1" fill="#555"/><rect x="349" y="300" width="1" height="1" fill="#555"/><rect x="349" y="302" width="1" height="1" fill="#555"/><rect x="349" y="304" width="1" height="1" fill="#555"/><rect x="349" y="306" width="1" height="1" fill="#555"/><rect x="349" y="308" width="1" height="1" fill="#555"/><rect x="351" y="296" width="1" height="1" fill="#555"/><rect x="351" y="302" width="1" height="1" fill="#555"/><rect x="353" y="296" width="1" height="1" fill="#555"/><rect x="353" y="302" width="1" height="1" fill="#555"/><rect x="355" y="296" width="1" height="1" fill="#555"/><rect x="355" y="298" width="1" height="1" fill="#555"/><rect x="355" y="300" width="1" height="1" fill="#555"/><rect x="355" y="302" width="1" height="1" fill="#555"/><rect x="355" y="304" width="1" height="1" fill="#555"/><rect x="355" y="306" width="1" height="1" fill="#555"/><rect x="355" y="308" width="1" height="1" fill="#555"/></g>
<rect x="340.5" y="317.5" width="19" height="19" fill="#C8C8C8" stroke="#A6A6A6" stroke-width="1" shape-rendering="crispEdges"/>
<rect x="343" y="320" width="13" height="13" fill="#FFFFFF" />
<g shape-rendering="crispEdges"><rect x="343" y="320" width="13" height="1" fill="#666"/><rect x="343" y="320" width="1" height="1" fill="#555"/><rect x="343" y="322" width="1" height="1" fill="#555"/><rect x="343" y="324" width="1" height="1" fill="#555"/><rect x="343" y="326" width="1" height="1" fill="#555"/><rect x="343" y="328" width="1" height="1" fill="#555"/><rect x="343" y="330" width="1" height="1" fill="#555"/><rect x="343" y="332" width="1" height="1" fill="#555"/><rect x="345" y="326" width="1" height="1" fill="#555"/><rect x="345" y="332" width="1" height="1" fill="#555"/><rect x="347" y="326" width="1" height="1" fill="#555"/><rect x="347" y="332" width="1" height="1" fill="#555"/><rect x="349" y="320" width="1" height="1" fill="#555"/><rect x="349" y="322" width="1" height="1" fill="#555"/><rect x="349" y="324" width="1" height="1" fill="#555"/><rect x="349" y="326" width="1" height="1" fill="#555"/><rect x="349" y="328" width="1" height="1" fill="#555"/><rect x="349" y="330" width="1" height="1" fill="#555"/><rect x="349" y="332" width="1" height="1" fill="#555"/><rect x="351" y="326" width="1" height="1" fill="#555"/><rect x="351" y="332" width="1" height="1" fill="#555"/><rect x="353" y="326" width="1" height="1" fill="#555"/><rect x="353" y="332" width="1" height="1" fill="#555"/><rect x="355" y="320" width="1" height="1" fill="#555"/><rect x="355" y="322" width="1" height="1" fill="#555"/><rect x="355" y="324" width="1" height="1" fill="#555"/><rect x="355" y="326" width="1" height="1" fill="#555"/><rect x="355" y="328" width="1" height="1" fill="#555"/><rect x="355" y="330" width="1" height="1" fill="#555"/><rect x="355" y="332" width="1" height="1" fill="#555"/></g>
<rect x="340.5" y="341.5" width="19" height="19" fill="#C8C8C8" stroke="#A6A6A6" stroke-width="1" shape-rendering="crispEdges"/>
<rect x="343" y="344" width="13" height="13" fill="#FFFFFF" />
<g shape-rendering="crispEdges"><rect x="343" y="344" width="1" height="13" fill="#666"/><rect x="343" y="344" width="1" height="1" fill="#555"/><rect x="343" y="350" width="1" height="1" fill="#555"/><rect x="343" y="356" width="1" height="1" fill="#555"/><rect x="345" y="344" width="1" height="1" fill="#555"/><rect x="345" y="350" width="1" height="1" fill="#555"/><rect x="345" y="356" width="1" height="1" fill="#555"/><rect x="347" y="344" width="1" height="1" fill="#555"/><rect x="347" y="350" width="1" height="1" fill="#555"/><rect x="347" y="356" width="1" height="1" fill="#555"/><rect x="349" y="344" width="1" height="1" fill="#555"/><rect x="349" y="346" width="1" height="1" fill="#555"/><rect x="349" y="348" width="1" height="1" fill="#555"/><rect x="349" y="350" width="1" height="1" fill="#555"/><rect x="349" y="352" width="1" height="1" fill="#555"/><rect x="349" y="354" width="1" height="1" fill="#555"/><rect x="349" y="356" width="1" height="1" fill="#555"/><rect x="351" y="344" width="1" height="1" fill="#555"/><rect x="351" y="350" width="1" height="1" fill="#555"/><rect x="351" y="356" width="1" height="1" fill="#555"/><rect x="353" y="344" width="1" height="1" fill="#555"/><rect x="353" y="350" width="1" height="1" fill="#555"/><rect x="353" y="356" width="1" height="1" fill="#555"/><rect x="355" y="344" width="1" height="1" fill="#555"/><rect x="355" y="346" width="1" height="1" fill="#555"/><rect x="355" y="348" width="1" height="1" fill="#555"/><rect x="355" y="350" width="1" height="1" fill="#555"/><rect x="355" y="352" width="1" height="1" fill="#555"/><rect x="355" y="354" width="1" height="1" fill="#555"/><rect x="355" y="356" width="1" height="1" fill="#555"/></g>
<rect x="340.5" y="365.5" width="19" height="19" fill="#C8C8C8" stroke="#A6A6A6" stroke-width="1" shape-rendering="crispEdges"/>
<rect x="343" y="368" width="13" height="13" fill="#FFFFFF" />
<g shape-rendering="crispEdges"><rect x="355" y="368" width="1" height="13" fill="#666"/><rect x="343" y="368" width="1" height="1" fill="#555"/><rect x="343" y="370" width="1" height="1" fill="#555"/><rect x="343" y="372" width="1" height="1" fill="#555"/><rect x="343" y="374" width="1" height="1" fill="#555"/><rect x="343" y="376" width="1" height="1" fill="#555"/><rect x="343" y="378" width="1" height="1" fill="#555"/><rect x="343" y="380" width="1" height="1" fill="#555"/><rect x="345" y="368" width="1" height="1" fill="#555"/><rect x="345" y="374" width="1" height="1" fill="#555"/><rect x="345" y="380" width="1" height="1" fill="#555"/><rect x="347" y="368" width="1" height="1" fill="#555"/><rect x="347" y="374" width="1" height="1" fill="#555"/><rect x="347" y="380" width="1" height="1" fill="#555"/><rect x="349" y="368" width="1" height="1" fill="#555"/><rect x="349" y="370" width="1" height="1" fill="#555"/><rect x="349" y="372" width="1" height="1" fill="#555"/><rect x="349" y="374" width="1" height="1" fill="#555"/><rect x="349" y="376" width="1" height="1" fill="#555"/><rect x="349" y="378" width="1" height="1" fill="#555"/><rect x="349" y="380" width="1" height="1" fill="#555"/><rect x="351" y="368" width="1" height="1" fill="#555"/><rect x="351" y="374" width="1" height="1" fill="#555"/><rect x="351" y="380" width="1" height="1" fill="#555"/><rect x="353" y="368" width="1" height="1" fill="#555"/><rect x="353" y="374" width="1" height="1" fill="#555"/><rect x="353" y="380" width="1" height="1" fill="#555"/><rect x="355" y="368" width="1" height="1" fill="#555"/><rect x="355" y="374" width="1" height="1" fill="#555"/><rect x="355" y="380" width="1" height="1" fill="#555"/></g>
<g shape-rendering="crispEdges"><rect x="343" y="393" width="1" height="1" fill="#555"/><rect x="343" y="395" width="1" height="1" fill="#555"/><rect x="343" y="397" width="1" height="1" fill="#555"/><rect x="343" y="399" width="1" height="1" fill="#555"/><rect x="343" y="401" width="1" height="1" fill="#555"/><rect x="343" y="403" width="1" height="1" fill="#555"/><rect x="343" y="405" width="1" height="1" fill="#555"/><rect x="345" y="393" width="1" height="1" fill="#555"/><rect x="345" y="399" width="1" height="1" fill="#555"/><rect x="345" y="405" width="1" height="1" fill="#555"/><rect x="347" y="393" width="1" height="1" fill="#555"/><rect x="347" y="399" width="1" height="1" fill="#555"/><rect x="347" y="405" width="1" height="1" fill="#555"/><rect x="349" y="393" width="1" height="1" fill="#555"/><rect x="349" y="395" width="1" height="1" fill="#555"/><rect x="349" y="397" width="1" height="1" fill="#555"/><rect x="349" y="399" width="1" height="1" fill="#555"/><rect x="349" y="401" width="1" height="1" fill="#555"/><rect x="349" y="403" width="1" height="1" fill="#555"/><rect x="349" y="405" width="1" height="1" fill="#555"/><rect x="351" y="393" width="1" height="1" fill="#555"/><rect x="351" y="399" width="1" height="1" fill="#555"/><rect x="351" y="405" width="1" height="1" fill="#555"/><rect x="353" y="393" width="1" height="1" fill="#555"/><rect x="353" y="399" width="1" height="1" fill="#555"/><rect x="353" y="405" width="1" height="1" fill="#555"/><rect x="355" y="393" width="1" height="1" fill="#555"/><rect x="355" y="395" width="1" height="1" fill="#555"/><rect x="355" y="397" width="1" height="1" fill="#555"/><rect x="355" y="399" width="1" height="1" fill="#555"/><rect x="355" y="401" width="1" height="1" fill="#555"/><rect x="355" y="403" width="1" height="1" fill="#555"/><rect x="355" y="405" width="1" height="1" fill="#555"/></g>
<g shape-rendering="crispEdges"><rect x="343" y="417" width="13" height="1" fill="#666"/><rect x="343" y="429" width="13" height="1" fill="#666"/><rect x="343" y="423" width="13" height="1" fill="#666"/><rect x="343" y="417" width="1" height="13" fill="#666"/><rect x="355" y="417" width="1" height="13" fill="#666"/><rect x="349" y="417" width="1" height="13" fill="#666"/></g>
<rect x="340.5" y="438.5" width="19" height="19" fill="#C8C8C8" stroke="#A6A6A6" stroke-width="1" shape-rendering="crispEdges"/>
<rect x="343" y="441" width="13" height="13" fill="#FFFFFF" />
<g shape-rendering="crispEdges"><rect x="343" y="441" width="13" height="1" fill="#666"/><rect x="343" y="453" width="13" height="1" fill="#666"/><rect x="343" y="441" width="1" height="13" fill="#666"/><rect x="355" y="441" width="1" height="13" fill="#666"/><rect x="343" y="447" width="1" height="1" fill="#555"/><rect x="345" y="447" width="1" height="1" fill="#555"/><rect x="347" y="447" width="1" height="1" fill="#555"/><rect x="349" y="441" width="1" height="1" fill="#555"/><rect x="349" y="443" width="1" height="1" fill="#555"/><rect x="349" y="445" width="1" height="1" fill="#555"/><rect x="349" y="447" width="1" height="1" fill="#555"/><rect x="349" y="449" width="1" height="1" fill="#555"/><rect x="349" y="451" width="1" height="1" fill="#555"/><rect x="349" y="453" width="1" height="1" fill="#555"/><rect x="351" y="447" width="1" height="1" fill="#555"/><rect x="353" y="447" width="1" height="1" fill="#555"/><rect x="355" y="447" width="1" height="1" fill="#555"/></g>
<g shape-rendering="crispEdges"><rect x="343" y="471" width="13" height="1" fill="#666"/><rect x="349" y="465" width="1" height="13" fill="#666"/><rect x="343" y="465" width="1" height="1" fill="#555"/><rect x="343" y="467" width="1" height="1" fill="#555"/><rect x="343" y="469" width="1" height="1" fill="#555"/><rect x="343" y="471" width="1" height="1" fill="#555"/><rect x="343" y="473" width="1" height="1" fill="#555"/><rect x="343" y="475" width="1" height="1" fill="#555"/><rect x="343" y="477" width="1" height="1" fill="#555"/><rect x="345" y="465" width="1" height="1" fill="#555"/><rect x="345" y="477" width="1" height="1" fill="#555"/><rect x="347" y="465" width="1" height="1" fill="#555"/><rect x="347" y="477" width="1" height="1" fill="#555"/><rect x="349" y="465" width="1" height="1" fill="#555"/><rect x="349" y="477" width="1" height="1" fill="#555"/><rect x="351" y="465" width="1" height="1" fill="#555"/><rect x="351" y="477" width="1" height="1" fill="#555"/><rect x="353" y="465" width="1" height="1" fill="#555"/><rect x="353" y="477" width="1" height="1" fill="#555"/><rect x="355" y="465" width="1" height="1" fill="#555"/><rect x="355" y="467" width="1" height="1" fill="#555"/><rect x="355" y="469" width="1" height="1" fill="#555"/><rect x="355" y="471" width="1" height="1" fill="#555"/><rect x="355" y="473" width="1" height="1" fill="#555"/><rect x="355" y="475" width="1" height="1" fill="#555"/><rect x="355" y="477" width="1" height="1" fill="#555"/></g>
<g shape-rendering="crispEdges"><rect x="343" y="496" width="13" height="1" fill="#666"/><rect x="343" y="490" width="1" height="1" fill="#555"/><rect x="343" y="492" width="1" height="1" fill="#555"/><rect x="343" y="494" width="1" height="1" fill="#555"/><rect x="343" y="496" width="1" height="1" fill="#555"/><rect x="343" y="498" width="1" height="1" fill="#555"/><rect x="343" y="500" width="1" height="1" fill="#555"/><rect x="343" y="502" width="1" height="1" fill="#555"/><rect x="345" y="490" width="1" height="1" fill="#555"/><rect x="345" y="502" width="1" height="1" fill="#555"/><rect x="347" y="490" width="1" height="1" fill="#555"/><rect x="347" y="502" width="1" height="1" fill="#555"/><rect x="349" y="490" width="1" height="1" fill="#555"/><rect x="349" y="492" width="1" height="1" fill="#555"/><rect x="349" y="494" width="1" height="1" fill="#555"/><rect x="349" y="496" width="1" height="1" fill="#555"/><rect x="349" y="498" width="1" height="1" fill="#555"/><rect x="349" y="500" width="1" height="1" fill="#555"/><rect x="349" y="502" width="1" height="1" fill="#555"/><rect x="351" y="490" width="1" height="1" fill="#555"/><rect x="351" y="502" width="1" height="1" fill="#555"/><rect x="353" y="490" width="1" height="1" fill="#555"/><rect x="353" y="502" width="1" height="1" fill="#555"/><rect x="355" y="490" width="1" height="1" fill="#555"/><rect x="355" y="492" width="1" height="1" fill="#555"/><rect x="355" y="494" width="1" height="1" fill="#555"/><rect x="355" y="496" width="1" height="1" fill="#555"/><rect x="355" y="498" width="1" height="1" fill="#555"/><rect x="355" y="500" width="1" height="1" fill="#555"/><rect x="355" y="502" width="1" height="1" fill="#555"/></g>
<g shape-rendering="crispEdges"><rect x="349" y="514" width="1" height="13" fill="#666"/><rect x="343" y="514" width="1" height="1" fill="#555"/><rect x="343" y="516" width="1" height="1" fill="#555"/><rect x="343" y="518" width="1" height="1" fill="#555"/><rect x="343" y="520" width="1" height="1" fill="#555"/><rect x="343" y="522" width="1" height="1" fill="#555"/><rect x="343" y="524" width="1" height="1" fill="#555"/><rect x="343" y="526" width="1" height="1" fill="#555"/><rect x="345" y="514" width="1" height="1" fill="#555"/><rect x="345" y="520" width="1" height="1" fill="#555"/><rect x="345" y="526" width="1" height="1" fill="#555"/><rect x="347" y="514" width="1" height="1" fill="#555"/><rect x="347" y="520" width="1" height="1" fill="#555"/><rect x="347" y="526" width="1" height="1" fill="#555"/><rect x="349" y="514" width="1" height="1" fill="#555"/><rect x="349" y="520" width="1" height="1" fill="#555"/><rect x="349" y="526" width="1" height="1" fill="#555"/><rect x="351" y="514" width="1" height="1" fill="#555"/><rect x="351" y="520" width="1" height="1" fill="#555"/><rect x="351" y="526" width="1" height="1" fill="#555"/><rect x="353" y="514" width="1" height="1" fill="#555"/><rect x="353" y="520" width="1" height="1" fill="#555"/><rect x="353" y="526" width="1" height="1" fill="#555"/><rect x="355" y="514" width="1" height="1" fill="#555"/><rect x="355" y="516" width="1" height="1" fill="#555"/><rect x="355" y="518" width="1" height="1" fill="#555"/><rect x="355" y="520" width="1" height="1" fill="#555"/><rect x="355" y="522" width="1" height="1" fill="#555"/><rect x="355" y="524" width="1" height="1" fill="#555"/><rect x="355" y="526" width="1" height="1" fill="#555"/></g>
<g shape-rendering="crispEdges"><rect x="343" y="538" width="1" height="1" fill="#555"/><rect x="343" y="540" width="1" height="1" fill="#555"/><rect x="343" y="542" width="1" height="1" fill="#555"/><rect x="343" y="544" width="1" height="1" fill="#555"/><rect x="343" y="546" width="1" height="1" fill="#555"/><rect x="343" y="548" width="1" height="1" fill="#555"/><rect x="343" y="550" width="1" height="1" fill="#555"/><rect x="345" y="538" width="1" height="1" fill="#555"/><rect x="345" y="550" width="1" height="1" fill="#555"/><rect x="347" y="538" width="1" height="1" fill="#555"/><rect x="347" y="550" width="1" height="1" fill="#555"/><rect x="349" y="538" width="1" height="1" fill="#555"/><rect x="349" y="550" width="1" height="1" fill="#555"/><rect x="351" y="538" width="1" height="1" fill="#555"/><rect x="351" y="550" width="1" height="1" fill="#555"/><rect x="353" y="538" width="1" height="1" fill="#555"/><rect x="353" y="550" width="1" height="1" fill="#555"/><rect x="355" y="538" width="1" height="1" fill="#555"/><rect x="355" y="540" width="1" height="1" fill="#555"/><rect x="355" y="542" width="1" height="1" fill="#555"/><rect x="355" y="544" width="1" height="1" fill="#555"/><rect x="355" y="546" width="1" height="1" fill="#555"/><rect x="355" y="548" width="1" height="1" fill="#555"/><rect x="355" y="550" width="1" height="1" fill="#555"/><line x1="343.5" y1="538.5" x2="355.5" y2="550.5" stroke="#666" stroke-width="1.2"/></g>
<g shape-rendering="crispEdges"><rect x="343" y="562" width="1" height="1" fill="#555"/><rect x="343" y="564" width="1" height="1" fill="#555"/><rect x="343" y="566" width="1" height="1" fill="#555"/><rect x="343" y="568" width="1" height="1" fill="#555"/><rect x="343" y="570" width="1" height="1" fill="#555"/><rect x="343" y="572" width="1" height="1" fill="#555"/><rect x="343" y="574" width="1" height="1" fill="#555"/><rect x="345" y="562" width="1" height="1" fill="#555"/><rect x="345" y="574" width="1" height="1" fill="#555"/><rect x="347" y="562" width="1" height="1" fill="#555"/><rect x="347" y="574" width="1" height="1" fill="#555"/><rect x="349" y="562" width="1" height="1" fill="#555"/><rect x="349" y="574" width="1" height="1" fill="#555"/><rect x="351" y="562" width="1" height="1" fill="#555"/><rect x="351" y="574" width="1" height="1" fill="#555"/><rect x="353" y="562" width="1" height="1" fill="#555"/><rect x="353" y="574" width="1" height="1" fill="#555"/><rect x="355" y="562" width="1" height="1" fill="#555"/><rect x="355" y="564" width="1" height="1" fill="#555"/><rect x="355" y="566" width="1" height="1" fill="#555"/><rect x="355" y="568" width="1" height="1" fill="#555"/><rect x="355" y="570" width="1" height="1" fill="#555"/><rect x="355" y="572" width="1" height="1" fill="#555"/><rect x="355" y="574" width="1" height="1" fill="#555"/><line x1="343.5" y1="574.5" x2="355.5" y2="562.5" stroke="#666" stroke-width="1.2"/></g>
<g>
<path d="M343.4 593 L345.8 588.3 L348.2 593 M344.3 591.2 H347.3" fill="none" stroke="#555" stroke-width="1"/>
<path d="M343.4 602 L345.8 597.3 L348.2 602 M344.3 600.2 H347.3" fill="none" stroke="#555" stroke-width="1"/>
<rect x="349.3" y="589" width="7.4" height="1" fill="#999"/><rect x="349.3" y="591" width="5.5" height="1" fill="#999"/>
<rect x="349.3" y="598" width="7.4" height="1" fill="#999"/><rect x="349.3" y="600" width="5.5" height="1" fill="#999"/>
<rect x="343" y="594.2" width="14" height="1.6" fill="#3E7BC4"/>
</g>
<g>
<path d="M343.5 615.5 V628 H356 V619" fill="none" stroke="#666" stroke-width="1"/>
<rect x="343" y="615" width="10" height="2" fill="#555"/>
<path d="M346.5 617 V628 M343.5 621.8 H348 M351.5 623.5 V628" stroke="#888" stroke-width="1" fill="none"/>
<path d="M348.2 623.2 L357 614.4" stroke="#FFF" stroke-width="4.6" stroke-linecap="round"/>
<path d="M349.6 621.8 L356.2 615.2" stroke="#3E7BC4" stroke-width="2.8"/>
<path d="M347.4 624.2 L348.6 620.6 L351 623 Z" fill="#3E7BC4"/>
<circle cx="357.3" cy="614.1" r="1.5" fill="#3E7BC4"/>
</g>
<g>
<rect x="342.8" y="638.7" width="14.7" height="11.5" fill="#FFF" stroke="#666" stroke-width="1.1"/>
<path d="M345.3 639 V650 M349.3 641 V650 M353.5 641 V650 M343 641.2 H357 M345.3 644.5 H357 M345.3 647.7 H357" stroke="#3E7BC4" stroke-width="1" fill="none"/>
</g>
<g>
<path d="M344.8 662.8 H352.5 L354.5 664.8 V675.3 H344.8 Z" fill="#FFF" stroke="#666" stroke-width="1"/>
<rect x="346.1" y="664" width="6.9" height="10" fill="#EAC37A"/>
<rect x="348" y="666" width="3.1" height="5.9" fill="#FFF"/>
<path d="M352 663 L354.3 665.3" stroke="#666" stroke-width="1"/>
</g>
<g>
<path d="M547 667 L558 658 L560 663 L676 666.3 L676 669.3 L560 671.6 L558 676.4 Z" fill="#000" opacity="0.18" transform="translate(1.2,1.5)" filter="url(#sh2)"/>
<path d="M547 667 L558 658 L560 663 L676 666.3 L676 669.3 L560 671.6 L558 676.4 Z" fill="#E2382C"/>
</g>
</svg>
</body></html>
